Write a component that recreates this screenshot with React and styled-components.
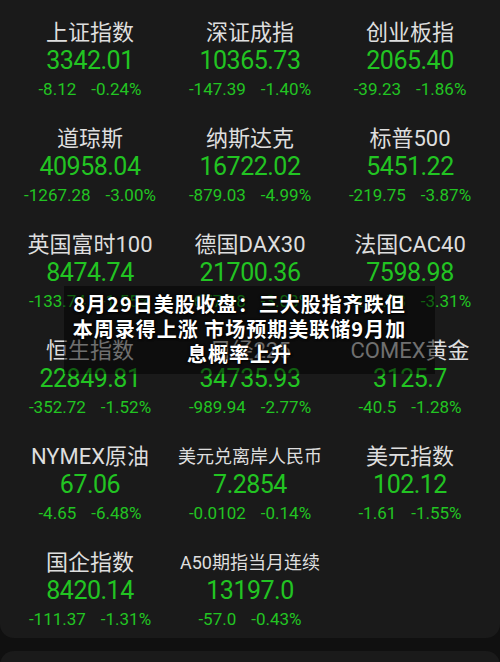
import React from 'react'
import styled, { createGlobalStyle } from 'styled-components'

const GlobalStyle = createGlobalStyle`
  html, body {
    margin: 0;
    padding: 0;
    background: #101010;
  }
  body {
    font-family: "Roboto", "Noto Sans CJK SC", sans-serif;
  }
`

const indices = [
  { name: '上证指数', value: '3342.01', change: '-8.12', pct: '-0.24%' },
  { name: '深证成指', value: '10365.73', change: '-147.39', pct: '-1.40%' },
  { name: '创业板指', value: '2065.40', change: '-39.23', pct: '-1.86%' },
  { name: '道琼斯', value: '40958.04', change: '-1267.28', pct: '-3.00%' },
  { name: '纳斯达克', value: '16722.02', change: '-879.03', pct: '-4.99%' },
  { name: '标普500', value: '5451.22', change: '-219.75', pct: '-3.87%' },
  { name: '英国富时100', value: '8474.74', change: '-133.74', pct: '-1.55%' },
  { name: '德国DAX30', value: '21700.36', change: '-677.98', pct: '-3.03%' },
  { name: '法国CAC40', value: '7598.98', change: '-259.78', pct: '-3.31%' },
  { name: '恒生指数', value: '22849.81', change: '-352.72', pct: '-1.52%' },
  { name: '日经225', value: '34735.93', change: '-989.94', pct: '-2.77%' },
  { name: 'COMEX黄金', value: '3125.7', change: '-40.5', pct: '-1.28%' },
  { name: 'NYMEX原油', value: '67.06', change: '-4.65', pct: '-6.48%' },
  { name: '美元兑离岸人民币', value: '7.2854', change: '-0.0102', pct: '-0.14%', small: true },
  { name: '美元指数', value: '102.12', change: '-1.61', pct: '-1.55%' },
  { name: '国企指数', value: '8420.14', change: '-111.37', pct: '-1.31%' },
  { name: 'A50期指当月连续', value: '13197.0', change: '-57.0', pct: '-0.43%', small: true },
]

const Page = styled.div`
  position: relative;
  width: 500px;
  height: 662px;
  overflow: hidden;
  background: #101010;
`

const Card = styled.div`
  background: #1a1a1a;
  border-radius: 0 0 14px 14px;
  padding: 19px 10px 5px;
`

const Grid = styled.div`
  display: grid;
  grid-template-columns: repeat(3, 160px);
  row-gap: 22px;
`

const Cell = styled.div`
  display: flex;
  flex-direction: column;
  align-items: center;
  height: 84px;
`

const Name = styled.div`
  height: 28px;
  line-height: 28px;
  font-size: ${p => (p.$small ? '18px' : '22px')};
  color: #dedede;
  white-space: nowrap;
`

const Value = styled.div`
  height: 28px;
  line-height: 28px;
  font-size: 25px;
  letter-spacing: -0.5px;
  color: #22c422;
`

const Changes = styled.div`
  display: flex;
  gap: 15px;
  height: 28px;
  line-height: 28px;
  font-size: 17px;
  color: #22c422;
`

const NextCard = styled.div`
  margin-top: 13px;
  height: 40px;
  background: #1a1a1a;
  border-radius: 14px 14px 0 0;
`

const Headline = styled.div`
  position: absolute;
  left: 64px;
  top: 286px;
  width: 371px;
  box-sizing: border-box;
  padding: 5px 20px 8px 0;
  background: rgba(0, 0, 0, 0.5);
  text-align: center;
  font-family: "Noto Sans CJK SC", sans-serif;
  font-weight: 700;
  font-size: 20px;
  letter-spacing: 1px;
  line-height: 25px;
  color: #ffffff;
  text-shadow: 0 0 3px #000, 1px 1px 2px #000;
`

export default function App() {
  return (
    <>
      <GlobalStyle />
      <Page>
        <Card>
          <Grid>
            {indices.map(item => (
              <Cell key={item.name}>
                <Name $small={item.small}>{item.name}</Name>
                <Value>{item.value}</Value>
                <Changes>
                  <span>{item.change}</span>
                  <span>{item.pct}</span>
                </Changes>
              </Cell>
            ))}
          </Grid>
        </Card>
        <NextCard />
        <Headline>
          8月29日美股收盘：三大股指齐跌但
          <br />
          本周录得上涨 市场预期美联储9月加
          <br />
          息概率上升
        </Headline>
      </Page>
    </>
  )
}
